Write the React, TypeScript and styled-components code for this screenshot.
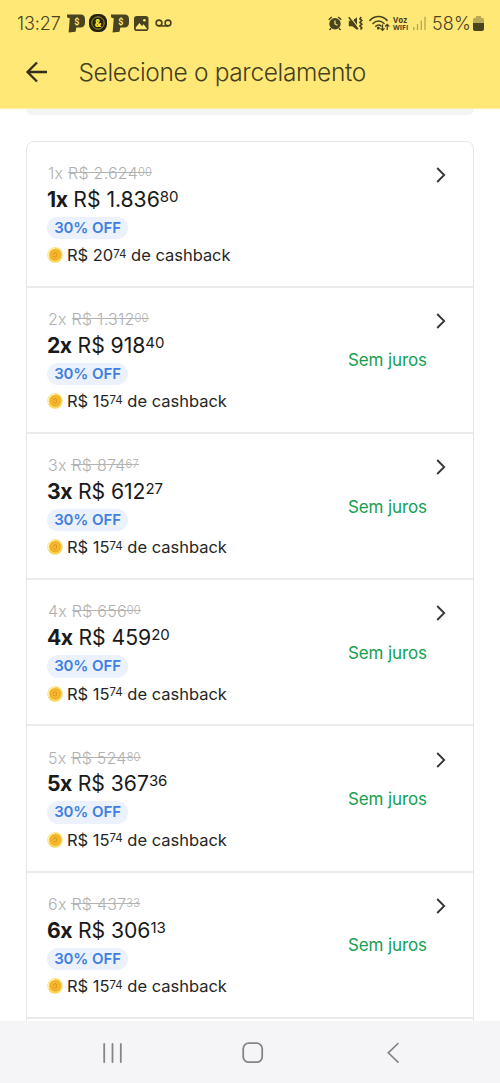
import React from 'react';
import styled, { createGlobalStyle } from 'styled-components';

const GlobalStyle = createGlobalStyle`
  * { box-sizing: border-box; }
  body { margin: 0; background: #fff; font-family: Inter, "Liberation Sans", sans-serif; }
`;

const Screen = styled.div`
  width: 500px;
  height: 1083px;
  display: flex;
  flex-direction: column;
  overflow: hidden;
  background: #fff;
`;

const Header = styled.header`
  height: 109px;
  flex: none;
  background: #ffe876;
  border-bottom: 1px solid #fff0a5;
`;

const StatusBar = styled.div`
  height: 46px;
  display: flex;
  align-items: center;
  padding: 0 16px 0 17px;
  color: #4a431f;
`;

const Clock = styled.span`
  width: 50px;
  font-size: 18px;
  font-weight: 300;
  letter-spacing: -0.1px;
  white-space: nowrap;
`;

const Glyph = styled.svg<{ $gap?: number }>`
  display: block;
  flex: none;
  margin-right: ${(p) => p.$gap ?? 0}px;
`;

const Spacer = styled.div`
  flex: 1;
`;

const VoWifi = styled.div`
  width: 16px;
  margin-right: 4px;
  display: flex;
  flex-direction: column;
  font-family: "Open Sans", sans-serif;
  font-weight: 700;
  white-space: nowrap;
`;

const Voz = styled.span`
  font-size: 8px;
  line-height: 8px;
`;

const Wifi = styled.span`
  font-size: 7px;
  line-height: 7px;
`;

const BatteryText = styled.span`
  width: 41px;
  font-size: 18px;
  font-weight: 300;
  letter-spacing: 0.1px;
`;

const TitleBar = styled.div`
  height: 52px;
  display: flex;
  align-items: center;
  padding-left: 25px;
`;

const Title = styled.h1`
  margin: 0 0 0 29.5px;
  font-size: 24.5px;
  font-weight: 300;
  letter-spacing: -0.36px;
  line-height: 30px;
  color: #45401f;
  white-space: nowrap;
`;

const Content = styled.main`
  flex: 1;
  min-height: 0;
  overflow: hidden;
  padding: 0 26px;
`;

const PreviousCard = styled.div`
  height: 6px;
  border-radius: 0 0 7px 7px;
  background: #f4f4f4;
`;

const Card = styled.section`
  margin-top: 26px;
  border: 1px solid #e6e6e6;
  border-radius: 8px;
`;

const Row = styled.div`
  height: 146.25px;
  display: flex;
  justify-content: space-between;
  padding: 20.25px 20px 0;
  border-bottom: 2px solid #ebebeb;
  &:first-child { height: 145.7px; padding-top: 20px; }
`;

const Details = styled.div`
  display: flex;
  flex-direction: column;
  align-items: flex-start;
  white-space: nowrap;
`;

const OldPrice = styled.div`
  height: 22.7px;
  line-height: 22px;
  padding-left: 1px;
  font-size: 16px;
  font-weight: 300;
  letter-spacing: 0.25px;
  color: #b0b0b0;
`;

const Price = styled.div`
  height: 30px;
  line-height: 28.5px;
  font-size: 21.2px;
  font-weight: 370;
  letter-spacing: -0.05px;
  color: #1a1a1a;
  b { font-weight: 650; letter-spacing: -0.5px; }
`;

const Cents = styled.span<{ $size: number; $raise: number }>`
  position: relative;
  top: -${(p) => p.$raise}px;
  font-size: ${(p) => p.$size}px;
  line-height: 1;
`;

const Struck = styled.span`
  position: relative;
  &::after {
    content: '';
    position: absolute;
    left: 0;
    right: 0;
    top: 9px;
    height: 1px;
    background: #b3b3b3;
  }
`;

const Badge = styled.div`
  height: 22.5px;
  width: 81px;
  margin-top: 2px;
  border-radius: 12px;
  background: #ebf2fd;
  color: #3f80e0;
  text-align: center;
  font-size: 15px;
  font-weight: 600;
  line-height: 22px;
  letter-spacing: -0.1px;
`;

const Cashback = styled.div`
  display: flex;
  align-items: center;
  gap: 4px;
  height: 20px;
  margin-top: 6px;
  font-size: 16.5px;
  font-weight: 370;
  letter-spacing: -0.02px;
  line-height: 20px;
  color: #262626;
`;

const Side = styled.div`
  display: flex;
  flex-direction: column;
  align-items: flex-end;
`;

const NoInterest = styled.div`
  margin: 16.4px 26px 0 0;
  font-size: 17px;
  font-weight: 370;
  line-height: 22px;
  letter-spacing: -0.1px;
  color: #16a052;
`;

const NavBar = styled.nav`
  height: 62px;
  flex: none;
  display: flex;
  align-items: center;
  padding: 1px 0 0 102px;
  background: #f5f5f7;
`;

const Coin = () => (
  <Glyph width="16" height="16" viewBox="0 0 16 16">
    <circle cx="8" cy="8" r="7.7" fill="#f9d65c" />
    <path d="M2 11A6.8 6.8 0 0 1 8 1.2" fill="none" stroke="#fff0a8" strokeWidth="1.3" />
    <circle cx="8.2" cy="7.8" r="5.6" fill="#f0aa22" />
    <circle cx="8.2" cy="7.8" r="4.3" fill="#f7bb30" />
    <path d="M5.8 8.4c.3-2 1.7-3.1 3.2-2.6 1.2.5 1 1.8-.2 2 1.3.3 1.2 2-.3 2.2-1 .2-2-.2-2.4-1" fill="none" stroke="#dd9118" strokeWidth="1" />
  </Glyph>
);

const PTag = ({ gap }: { gap: number }) => (
  <Glyph $gap={gap} width="18" height="19" viewBox="0 0 18 19">
    <path d="M0 .6h13.5C16.6.6 18 2.2 18 5v3.5c0 3.4-1.6 5-4.6 5H9.4l-.9 4.2-6.9.8L2.8 4.6 0 3.2z" fill="currentColor" />
    <text x="9.8" y="10.7" textAnchor="middle" fontFamily="Roboto, sans-serif" fontSize="9" fontWeight="700" fill="#ffe876">$</text>
  </Glyph>
);

const plans = [
  ['1x', '2.624', '00', '1.836', '80', '20'],
  ['2x', '1.312', '00', '918', '40', '15'],
  ['3x', '874', '67', '612', '27', '15'],
  ['4x', '656', '00', '459', '20', '15'],
  ['5x', '524', '80', '367', '36', '15'],
  ['6x', '437', '33', '306', '13', '15'],
];

export default function App() {
  return (
    <Screen>
      <GlobalStyle />
      <Header>
        <StatusBar>
          <Clock>13:27</Clock>
          <PTag gap={4} />
          <Glyph $gap={4} width="18" height="18" viewBox="0 0 18 18">
            <rect width="18" height="18" rx="7.5" fill="#23200e" />
            <circle cx="9" cy="9" r="6.2" fill="none" stroke="#b3a42e" strokeWidth="0.9" />
            <text x="9" y="12.7" textAnchor="middle" fontFamily="Roboto, sans-serif" fontSize="10" fontWeight="900" fill="#f6e535">&amp;</text>
          </Glyph>
          <PTag gap={5} />
          <Glyph $gap={6} width="15" height="15" viewBox="0 0 15 15">
            <rect width="14.5" height="15" rx="2.8" fill="currentColor" />
            <path d="M1.8 11.5 5.4 7l2.6 3 1.6-1.8 3.2 4.3v.8h-11z" fill="#ffe876" />
            <circle cx="10.4" cy="4.2" r="1.3" fill="#ffe876" />
          </Glyph>
          <Glyph width="17" height="9" viewBox="0 0 17 9">
            <circle cx="4" cy="4" r="2.9" fill="none" stroke="currentColor" strokeWidth="1.6" />
            <circle cx="13" cy="4" r="2.9" fill="none" stroke="currentColor" strokeWidth="1.6" />
            <path d="M4 6.9h9" stroke="currentColor" strokeWidth="1.6" />
          </Glyph>
          <Spacer />
          <Glyph $gap={6} width="14" height="15" viewBox="0 0 14 15">
            <circle cx="7" cy="7.8" r="5.7" fill="currentColor" />
            <path d="M.7 3.7 3.8 1M13.3 3.7 10.2 1M3 12.2l-1.5 1.7M11 12.2l1.5 1.7" stroke="currentColor" strokeWidth="1.5" />
            <path d="M7 4.5V8l2.6 1.3" fill="none" stroke="#ffe876" strokeWidth="1.2" />
          </Glyph>
          <Glyph $gap={5} width="16" height="15" viewBox="0 0 16 15">
            <path d="M.8 4.8h3.5L9 1.2v12.6l-4.7-3.5H.8z" fill="currentColor" />
            <path d="m1.8.6 8.4 10.8" stroke="#ffe876" strokeWidth="1.2" />
            <path d="m.8 1.2 9.2 12" stroke="currentColor" strokeWidth="1.5" />
            <path d="M13.2 1 12 2.8l1.8 1.8L12 6.4l1.8 1.8L12 10l1.8 1.8-1.2 1.8" fill="none" stroke="currentColor" strokeWidth="1.7" />
          </Glyph>
          <Glyph $gap={3} width="21" height="17" viewBox="0 0 21 17">
            <g fill="none" stroke="currentColor" strokeWidth="1.6" strokeLinecap="round">
              <path d="M1 5.4c4.6-5.2 12.4-5.2 17 0M4 8.5c3-3.3 8-3.3 11 0M6.8 11.2c1.6-1.6 3.8-1.6 5.2-.2" />
              <path d="M13.5 9.8v5.4M11.8 13.6l1.7 1.7 1.7-1.7M18.2 14.5V9.3M16.5 11l1.7-1.7L19.9 11" strokeWidth="1.3" />
            </g>
            <circle cx="9.3" cy="13" r="1.5" fill="currentColor" />
          </Glyph>
          <VoWifi><Voz>Voz</Voz><Wifi>WIFI</Wifi></VoWifi>
          <Glyph $gap={6} width="13" height="14" viewBox="0 0 13 14">
            <path d="M.8 11v3M4.5 8v6M8.3 4.5V14M12 .7V14" stroke="#b5a551" strokeWidth="1.3" />
          </Glyph>
          <BatteryText>58%</BatteryText>
          <Glyph width="11" height="15" viewBox="0 0 11 15">
            <path d="M3 0h5v1.7h1a2 2 0 0 1 2 2V7H0V3.7a2 2 0 0 1 2-2h1z" fill="#b9a956" />
            <path d="M0 7h11v6a2 2 0 0 1-2 2H2a2 2 0 0 1-2-2z" fill="currentColor" />
          </Glyph>
        </StatusBar>
        <TitleBar>
          <Glyph width="24" height="22" viewBox="0 0 24 22">
            <path d="M22 11H2.8M12 1.5 2.5 11l9.5 9.5" fill="none" stroke="#332f17" strokeWidth="2.3" />
          </Glyph>
          <Title>Selecione o parcelamento</Title>
        </TitleBar>
      </Header>
      <Content>
        <PreviousCard />
        <Card>
          {plans.map(([count, old, oldCents, price, cents, cash], i) => (
            <Row key={count}>
              <Details>
                <OldPrice>{count} <Struck>R$ {old}<Cents $size={11} $raise={3}>{oldCents}</Cents></Struck></OldPrice>
                <Price><b>{count}</b> R$ {price}<Cents $size={15} $raise={5}>{cents}</Cents></Price>
                <Badge>30% OFF</Badge>
                <Cashback>
                  <Coin />
                  <span>R$ {cash}<Cents $size={11.5} $raise={3.5}>74</Cents> de cashback</span>
                </Cashback>
              </Details>
              <Side>
                <Glyph $gap={7} width="10" height="25" viewBox="0 0 10 25">
                  <path d="m1.2 6 7 7-7 7" fill="none" stroke="#333" strokeWidth="1.8" />
                </Glyph>
                {i > 0 && <NoInterest>Sem juros</NoInterest>}
              </Side>
            </Row>
          ))}
          <Row />
        </Card>
      </Content>
      <NavBar>
        <Glyph $gap={119} width="21" height="22" viewBox="0 0 21 22">
          <path d="M2.2 2v18M10.5 2v18M18.8 2v18" stroke="#858585" strokeWidth="1.8" strokeLinecap="round" />
        </Glyph>
        <Glyph $gap={122} width="22" height="22" viewBox="0 0 22 22">
          <rect x="1.2" y="1.2" width="19" height="19" rx="5.5" fill="none" stroke="#858585" strokeWidth="1.8" />
        </Glyph>
        <Glyph width="14" height="22" viewBox="0 0 14 22">
          <path d="m12 1.5-9.7 9.3 9.7 9.4" fill="none" stroke="#858585" strokeWidth="1.7" strokeLinecap="round" />
        </Glyph>
      </NavBar>
    </Screen>
  );
}
